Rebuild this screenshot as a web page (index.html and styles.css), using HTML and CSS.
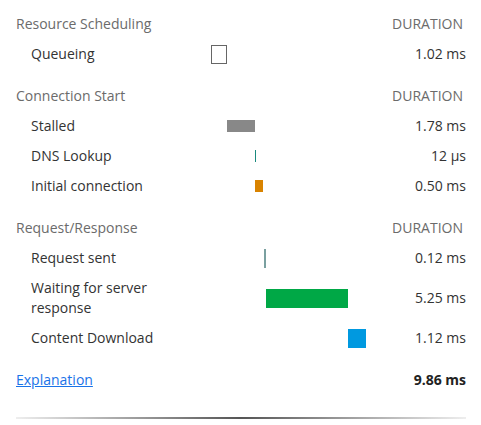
FILE: index.html
```html
<!DOCTYPE html>
<html>
<head>
<meta charset="utf-8">
<link rel="stylesheet" href="styles.css">
</head>
<body>
<div class="panel">
  <div class="group">
    <div class="head"><span class="title">Resource Scheduling</span><span class="dur-h">DURATION</span></div>
    <div class="row">
      <span class="label">Queueing</span>
      <span class="track"><span class="bar tall queue" style="margin-left:0px;width:16px"></span></span>
      <span class="val">1.02 ms</span>
    </div>
  </div>
  <div class="group">
    <div class="head"><span class="title">Connection Start</span><span class="dur-h">DURATION</span></div>
    <div class="row">
      <span class="label">Stalled</span>
      <span class="track"><span class="bar short stalled" style="margin-left:16px;width:28px"></span></span>
      <span class="val">1.78 ms</span>
    </div>
    <div class="row">
      <span class="label">DNS Lookup</span>
      <span class="track"><span class="bar short dns" style="margin-left:44px;width:1px"></span></span>
      <span class="val">12 µs</span>
    </div>
    <div class="row">
      <span class="label">Initial connection</span>
      <span class="track"><span class="bar short conn" style="margin-left:44px;width:8px"></span></span>
      <span class="val">0.50 ms</span>
    </div>
  </div>
  <div class="group">
    <div class="head"><span class="title">Request/Response</span><span class="dur-h">DURATION</span></div>
    <div class="row">
      <span class="label">Request sent</span>
      <span class="track"><span class="bar tall sent" style="margin-left:53px;width:2px"></span></span>
      <span class="val">0.12 ms</span>
    </div>
    <div class="row">
      <span class="label">Waiting for server response</span>
      <span class="track"><span class="bar tall wait" style="margin-left:55px;width:82px"></span></span>
      <span class="val">5.25 ms</span>
    </div>
    <div class="row">
      <span class="label">Content Download</span>
      <span class="track"><span class="bar tall download" style="margin-left:137px;width:18px"></span></span>
      <span class="val">1.12 ms</span>
    </div>
  </div>
  <div class="footer">
    <a class="link" href="#">Explanation</a>
    <span class="total">9.86 ms</span>
  </div>
  <div class="divider"></div>
</div>
</body>
</html>
```
FILE: styles.css
```css
html, body {
  margin: 0;
  padding: 0;
  background: #ffffff;
}
.panel {
  padding: 9px 15px 0 16px;
  font-family: "Open Sans", "Noto Sans", sans-serif;
  font-size: 14px;
  line-height: 20px;
  color: #333333;
}
.group {
  margin-bottom: 12px;
}
.head {
  display: flex;
  justify-content: space-between;
  align-items: center;
  height: 30px;
  color: #6b6b6b;
}
.dur-h {
  padding-right: 3px;
}
.row {
  display: grid;
  grid-template-columns: 180px 155px 1fr;
  align-items: center;
  padding: 5px 0 5px 15px;
}
.label {
  max-width: 150px;
}
.track {
  display: flex;
  align-items: center;
}
.bar {
  display: block;
  flex: none;
  box-sizing: border-box;
}
.tall { height: 19px; }
.short { height: 12px; }
.queue { border: 1px solid #666666; background: #ffffff; }
.stalled { background: #888888; }
.dns { background: #1a8a7e; }
.conn { background: #d98300; }
.sent { background: #7aa0a0; }
.wait { background: #00a846; }
.download { background: #0099e0; }
.val {
  text-align: right;
}
.footer {
  display: flex;
  justify-content: space-between;
  align-items: center;
  height: 30px;
  margin-top: 2px;
}
.link {
  color: #1a73e8;
  text-decoration: underline;
}
.total {
  font-weight: bold;
  color: #222222;
}
.divider {
  margin-top: 22px;
  height: 2px;
  background: linear-gradient(to right, #eeeeee, #555555 50%, #eeeeee);
}
```
